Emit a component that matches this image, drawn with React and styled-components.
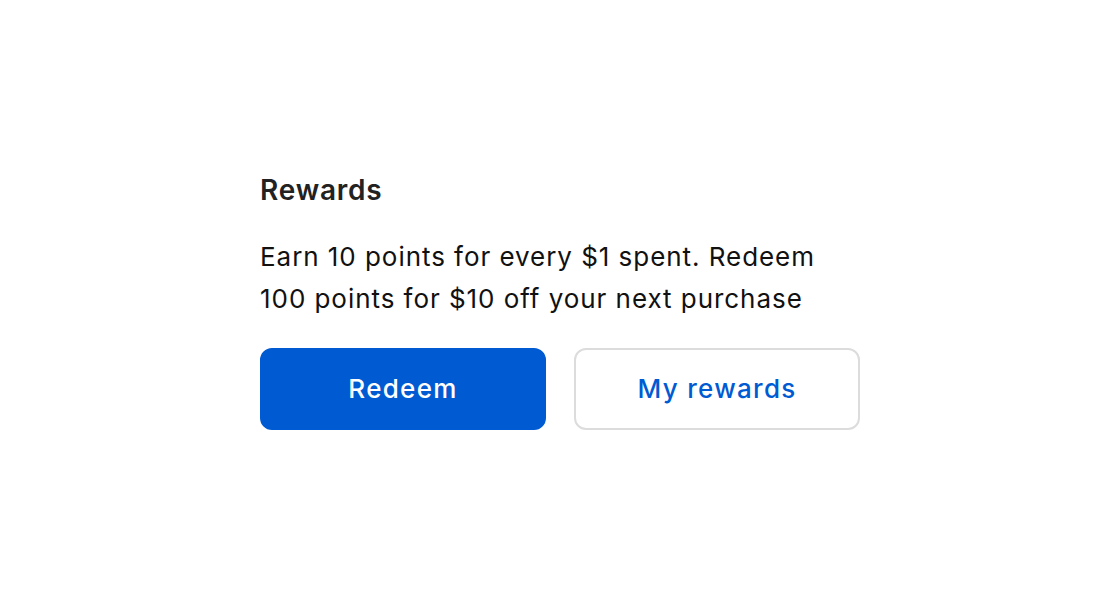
import React from "react"
import styled, { createGlobalStyle } from "styled-components"

const GlobalStyle = createGlobalStyle`
  html, body {
    margin: 0;
    padding: 0;
    background: #fff;
  }

  body {
    font-family: Inter, "Noto Sans", sans-serif;
  }
`

const Page = styled.div`
  box-sizing: border-box;
  width: 100vw;
  height: 100vh;
  padding-top: 4px;
  display: flex;
  justify-content: center;
  align-items: center;
`

const Card = styled.div`
  width: 600px;
  display: flex;
  flex-direction: column;
`

const Title = styled.h2`
  margin: 0;
  font-size: 28px;
  font-weight: 600;
  color: #222;
  line-height: 32px;
  letter-spacing: 0.8px;
`

const Text = styled.p`
  margin: 30px 0 0;
  font-size: 26px;
  line-height: 42px;
  letter-spacing: 0.95px;
  color: #111;
`

const Buttons = styled.div`
  display: grid;
  grid-template-columns: 1fr 1fr;
  gap: 28px;
  margin-top: 28px;
`

const Button = styled.button`
  height: 82px;
  padding: 0 0 2px;
  border-radius: 12px;
  font-family: inherit;
  font-size: 26px;
  font-weight: 500;
  letter-spacing: 1.3px;
  cursor: pointer;
  border: 2px solid ${({ $primary }) => ($primary ? "#005bd3" : "#dcdcdc")};
  background: ${({ $primary }) => ($primary ? "#005bd3" : "#fff")};
  color: ${({ $primary }) => ($primary ? "#fff" : "#005bd3")};
`

const App = () => (
  <>
    <GlobalStyle />
    <Page>
      <Card>
        <Title>Rewards</Title>
        <Text>
          Earn 10 points for every $1 spent. Redeem
          <br />
          100 points for $10 off your next purchase
        </Text>
        <Buttons>
          <Button $primary>Redeem</Button>
          <Button>My rewards</Button>
        </Buttons>
      </Card>
    </Page>
  </>
)

export default App
